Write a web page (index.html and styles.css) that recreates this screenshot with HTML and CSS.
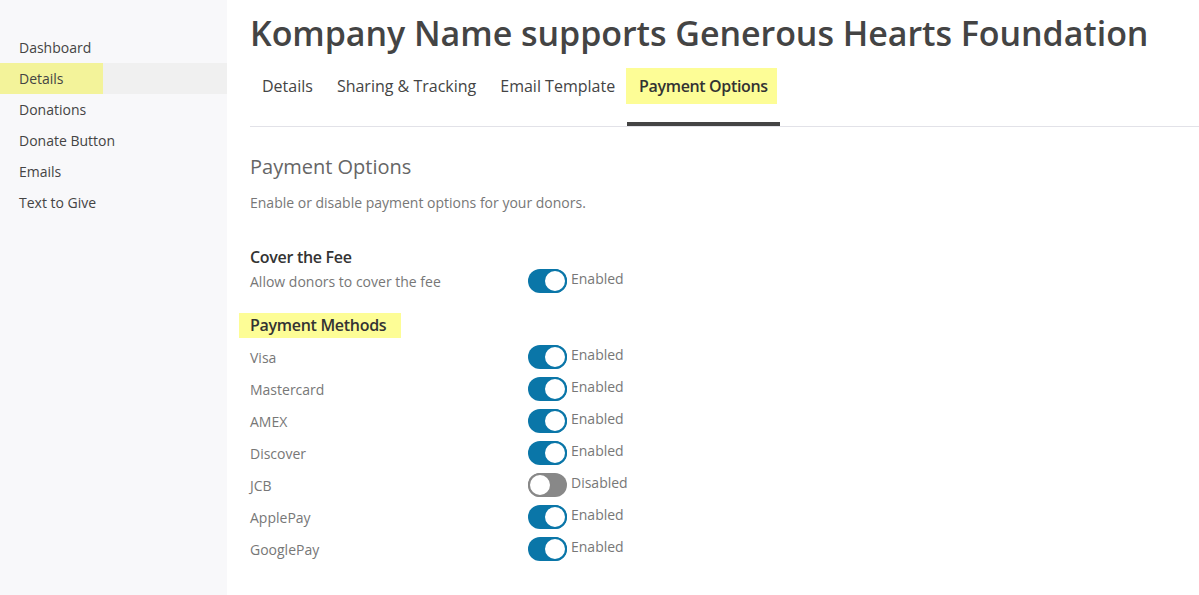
FILE: index.html
```html
<!DOCTYPE html>
<html lang="en">
<head>
    <meta charset="UTF-8">
    <meta name="viewport" content="width=device-width, initial-scale=1.0">
    <title>Payment Options</title>
    <link rel="stylesheet" href="styles.css">
</head>
<body>
    <!-- Side Navigation -->
    <div class="sidebar">
        <a href="#">Dashboard</a>
        <a href="#" class="active"><span>Details</span></a>
        <a href="#">Donations</a>
        <a href="#">Donate Button</a>
        <a href="#">Emails</a>
        <a href="#">Text to Give</a>
    </div>

    <div class="main">
        <h1>Kompany Name supports Generous Hearts Foundation</h1>

        <!-- Tabs -->
        <div class="tabs">
            <a href="#" class="tab">Details</a>
            <a href="#" class="tab">Sharing &amp; Tracking</a>
            <a href="#" class="tab">Email Template</a>
            <a href="#" class="tab active"><span>Payment Options</span></a>
        </div>

        <h2>Payment Options</h2>
        <p class="intro">Enable or disable payment options for your donors.</p>

        <div class="option">
            <h3>Cover the Fee</h3>
            <div class="row">
                <span class="label">Allow donors to cover the fee</span>
                <span class="switch on"></span>
                <span class="state">Enabled</span>
            </div>
        </div>

        <h3 class="methods"><span>Payment Methods</span></h3>
        <div class="row">
            <span class="label">Visa</span>
            <span class="switch on"></span>
            <span class="state">Enabled</span>
        </div>
        <div class="row">
            <span class="label">Mastercard</span>
            <span class="switch on"></span>
            <span class="state">Enabled</span>
        </div>
        <div class="row">
            <span class="label">AMEX</span>
            <span class="switch on"></span>
            <span class="state">Enabled</span>
        </div>
        <div class="row">
            <span class="label">Discover</span>
            <span class="switch on"></span>
            <span class="state">Enabled</span>
        </div>
        <div class="row">
            <span class="label">JCB</span>
            <span class="switch"></span>
            <span class="state">Disabled</span>
        </div>
        <div class="row">
            <span class="label">ApplePay</span>
            <span class="switch on"></span>
            <span class="state">Enabled</span>
        </div>
        <div class="row">
            <span class="label">GooglePay</span>
            <span class="switch on"></span>
            <span class="state">Enabled</span>
        </div>
    </div>
</body>
</html>
```

FILE: styles.css
```css
body {
    font-family: "Open Sans", Arial, sans-serif;
    margin: 0;
    display: flex;
    min-height: 595px;
    background-color: #fff;
    color: #444;
}
.sidebar {
    width: 227px;
    flex-shrink: 0;
    background-color: #f8f8fa;
    padding-top: 32px;
}
.sidebar a {
    display: block;
    height: 31px;
    line-height: 31px;
    padding-left: 19px;
    font-size: 14px;
    color: #444;
    text-decoration: none;
}
.sidebar a.active {
    background-color: #f0f0f0;
    padding-left: 0;
}
.sidebar a.active span {
    display: inline-block;
    width: 84px;
    padding-left: 19px;
    background-color: #f3f39a;
}
.main {
    flex: 1;
    padding-left: 23px;
}
h1 {
    font-size: 34px;
    font-weight: 600;
    color: #444;
    margin: 10px 0 10px;
    line-height: 46px;
    letter-spacing: -0.05px;
}
.tabs {
    display: flex;
    border-bottom: 1px solid #e2e2e8;
}
.tab {
    padding: 0 12px;
    height: 56px;
    line-height: 40px;
    font-size: 16px;
    color: #444;
    text-decoration: none;
    border-bottom: 4px solid transparent;
}
.tab.active {
    border-bottom-color: #444;
    font-weight: 600;
    color: #333;
    letter-spacing: -0.35px;
}
.tab.active span {
    display: inline-block;
    line-height: 36px;
    margin-left: -13px;
    padding: 0 9px 0 13px;
    margin-right: -9px;
    background-color: #fdfd96;
}
h2 {
    font-size: 20px;
    font-weight: 400;
    color: #666;
    margin: 26px 0 0;
    line-height: 28px;
}
.intro {
    font-size: 14px;
    color: #777;
    margin: 12px 0 0;
    line-height: 20px;
}
.option {
    margin-top: 33px;
}
h3 {
    font-size: 16px;
    font-weight: 600;
    color: #333;
    margin: 0;
    line-height: 22px;
    letter-spacing: -0.3px;
}
.option .row {
    height: 26px;
}
.methods {
    margin-top: 19px;
    margin-bottom: 3px;
}
.methods span {
    display: inline-block;
    line-height: 25px;
    margin-left: -11px;
    padding: 0 15px 0 11px;
    background-color: #fdfd96;
}
.row {
    display: flex;
    align-items: center;
    height: 32px;
}
.label {
    width: 278px;
    font-size: 14px;
    color: #777;
}
.switch {
    position: relative;
    width: 39px;
    height: 24px;
    border-radius: 12px;
    background-color: #888;
    box-sizing: border-box;
}
.switch:after {
    content: "";
    position: absolute;
    top: 0;
    left: 0;
    width: 24px;
    height: 24px;
    border-radius: 50%;
    background-color: #fff;
    border: 2px solid #888;
    box-sizing: border-box;
}
.switch.on {
    background-color: #0a76a8;
}
.switch.on:after {
    left: 15px;
    border-color: #0a76a8;
}
.state {
    font-size: 14px;
    color: #777;
    margin-left: 4px;
    margin-top: -6px;
}
```
